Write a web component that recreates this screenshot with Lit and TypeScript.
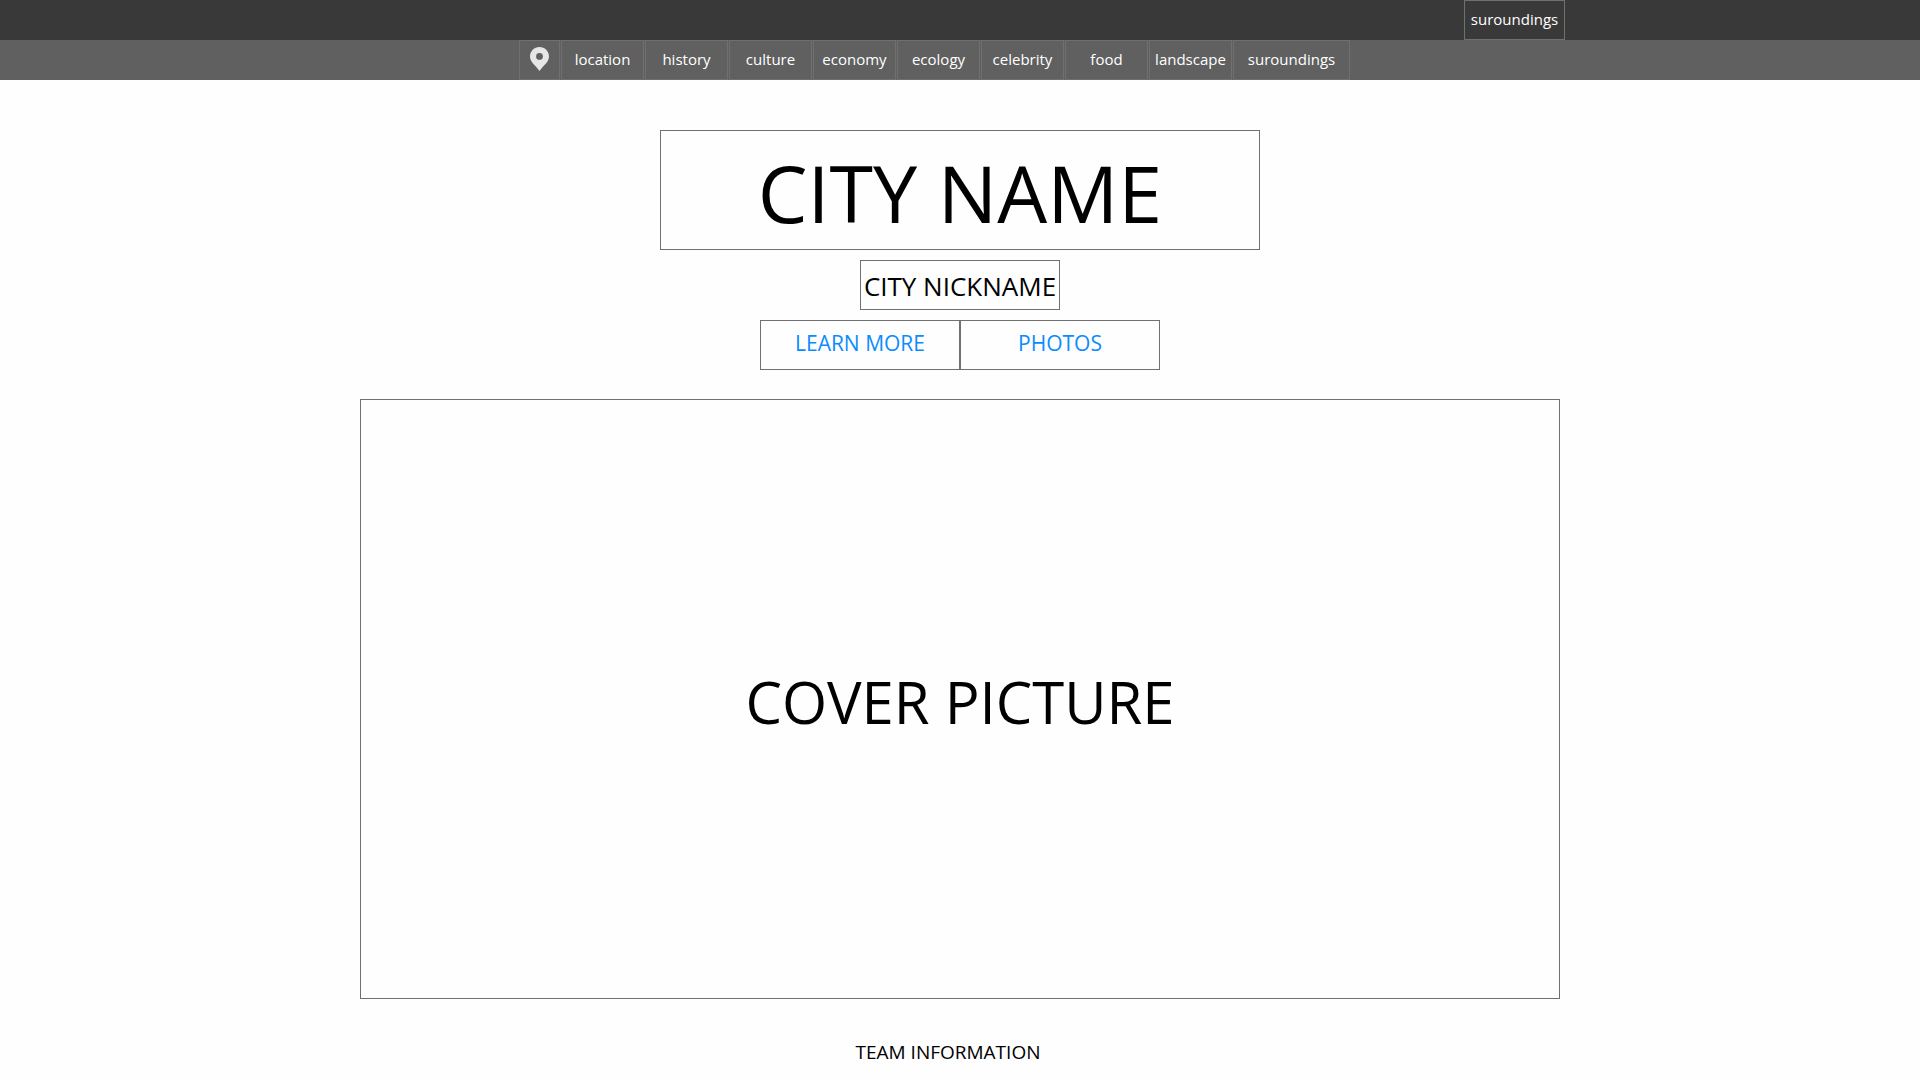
import { LitElement, html, css } from "lit";
import { customElement } from "lit/decorators.js";

const SECTIONS = ["location", "history", "culture", "economy", "ecology", "celebrity", "food", "landscape"];

@customElement("app-root")
export class AppRoot extends LitElement {
  static styles = css`
    :host {
      display: block;
      box-sizing: border-box;
      min-height: 100vh;
      font-family: "Open Sans", "Noto Sans", sans-serif;
      font-size: 15px;
      color: #000;
      background: #fefefe;
    }
    * {
      box-sizing: border-box;
    }
    a {
      text-decoration: none;
    }
    .topbar {
      display: flex;
      justify-content: center;
      background: #393939;
    }
    .topbar-inner {
      display: flex;
      justify-content: flex-end;
      width: 100%;
      max-width: 1210px;
    }
    .nav {
      display: flex;
      justify-content: center;
      gap: 1px;
      padding-right: 51px;
      background: #606060;
    }
    .item {
      display: flex;
      align-items: center;
      justify-content: center;
      width: 83px;
      height: 40px;
      padding-bottom: 2px;
      border: 1px solid #707070;
      line-height: 24px;
      color: #fff;
    }
    .item.icon {
      width: 41px;
    }
    .item.wide {
      width: 117px;
    }
    .item.top {
      width: 101px;
    }
    main {
      display: flex;
      flex-direction: column;
      align-items: center;
      padding-top: 50px;
    }
    .box {
      display: flex;
      align-items: center;
      justify-content: center;
      max-width: 100%;
      margin: 0;
      border: 1px solid #707070;
      font-weight: 400;
    }
    .name {
      width: 600px;
      height: 120px;
      padding-top: 6px;
      font-size: 79px;
      line-height: 100px;
    }
    .nickname {
      width: 200px;
      height: 50px;
      margin-top: 10px;
      padding-top: 2px;
      font-size: 26px;
      line-height: 32px;
      white-space: nowrap;
    }
    .actions {
      display: flex;
      margin-top: 10px;
    }
    .action {
      width: 200px;
      height: 50px;
      padding-bottom: 4px;
      font-size: 21px;
      line-height: 28px;
      color: #0a8cff;
    }
    .cover {
      width: 1200px;
      height: 600px;
      margin-top: 29px;
      padding-top: 6px;
      font-size: 58px;
      line-height: 80px;
    }
    .team {
      margin: 39px 0 0;
      padding-right: 24px;
      font-size: 19px;
      font-weight: 400;
      line-height: 28px;
    }
  `;

  render() {
    return html`
      <header>
        <div class="topbar">
          <div class="topbar-inner"><a class="item top" href="#suroundings">suroundings</a></div>
        </div>
        <nav class="nav" aria-label="Sections">
          <a class="item icon" href="#map" aria-label="Map">
            <svg width="19" height="24" viewBox="0 0 19 24" aria-hidden="true">
              <path
                fill="#e6e6e6"
                fill-rule="evenodd"
                d="M9.5 0C4.2 0 0 4.2 0 9.4C0 15 6 18.6 9.5 24C13 18.6 19 15 19 9.4C19 4.2 14.8 0 9.5 0ZM9.5 6A3.4 3.4 0 1 1 9.5 12.8A3.4 3.4 0 1 1 9.5 6Z"
              />
            </svg>
          </a>
          ${SECTIONS.map((name) => html`<a class="item" href="#${name}">${name}</a>`)}
          <a class="item wide" href="#suroundings">suroundings</a>
        </nav>
      </header>
      <main>
        <h1 class="box name">CITY NAME</h1>
        <p class="box nickname">CITY NICKNAME</p>
        <div class="actions">
          <a class="box action" href="#more">LEARN MORE</a>
          <a class="box action" href="#photos">PHOTOS</a>
        </div>
        <div class="box cover">COVER PICTURE</div>
        <h2 class="team">TEAM INFORMATION</h2>
      </main>
    `;
  }
}
